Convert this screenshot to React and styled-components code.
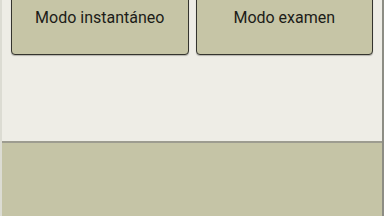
import React from 'react'
import styled, { createGlobalStyle } from 'styled-components'

const Global = createGlobalStyle`
  html, body {
    margin: 0;
    padding: 0;
    width: 384px;
    height: 216px;
    overflow: hidden;
    background: #eeede6;
  }
  #root {
    height: 100%;
  }
`

const Screen = styled.div`
  height: 216px;
  display: flex;
  flex-direction: column;
  border-left: 2px solid #dcdcd3;
  border-right: 2px solid #8d8d84;
  box-sizing: border-box;
  font-family: Roboto, "Liberation Sans", sans-serif;
`

const Top = styled.div`
  height: 141px;
  background: #eeede6;
  overflow: hidden;
`

const Modes = styled.div`
  display: grid;
  grid-template-columns: 1fr 1fr;
  gap: 7px;
  padding: 0 9px 0 9px;
  margin-top: -20px;
`

const ModeButton = styled.button`
  height: 75px;
  background: #c6c5a6;
  border: 1px solid #34342e;
  border-radius: 4px;
  box-shadow: 0 1px 1px rgba(0, 0, 0, 0.25);
  font-family: Roboto, "Liberation Sans", sans-serif;
  font-size: 16px;
  color: #1c1c18;
  padding: 0;
`

const Tray = styled.div`
  flex: 1;
  background: #c5c4a6;
  border-top: 2px solid #9d9c90;
`

export default function App() {
  return (
    <>
      <Global />
      <Screen>
        <Top>
          <Modes>
            <ModeButton>Modo instantáneo</ModeButton>
            <ModeButton>Modo examen</ModeButton>
          </Modes>
        </Top>
        <Tray />
      </Screen>
    </>
  )
}
